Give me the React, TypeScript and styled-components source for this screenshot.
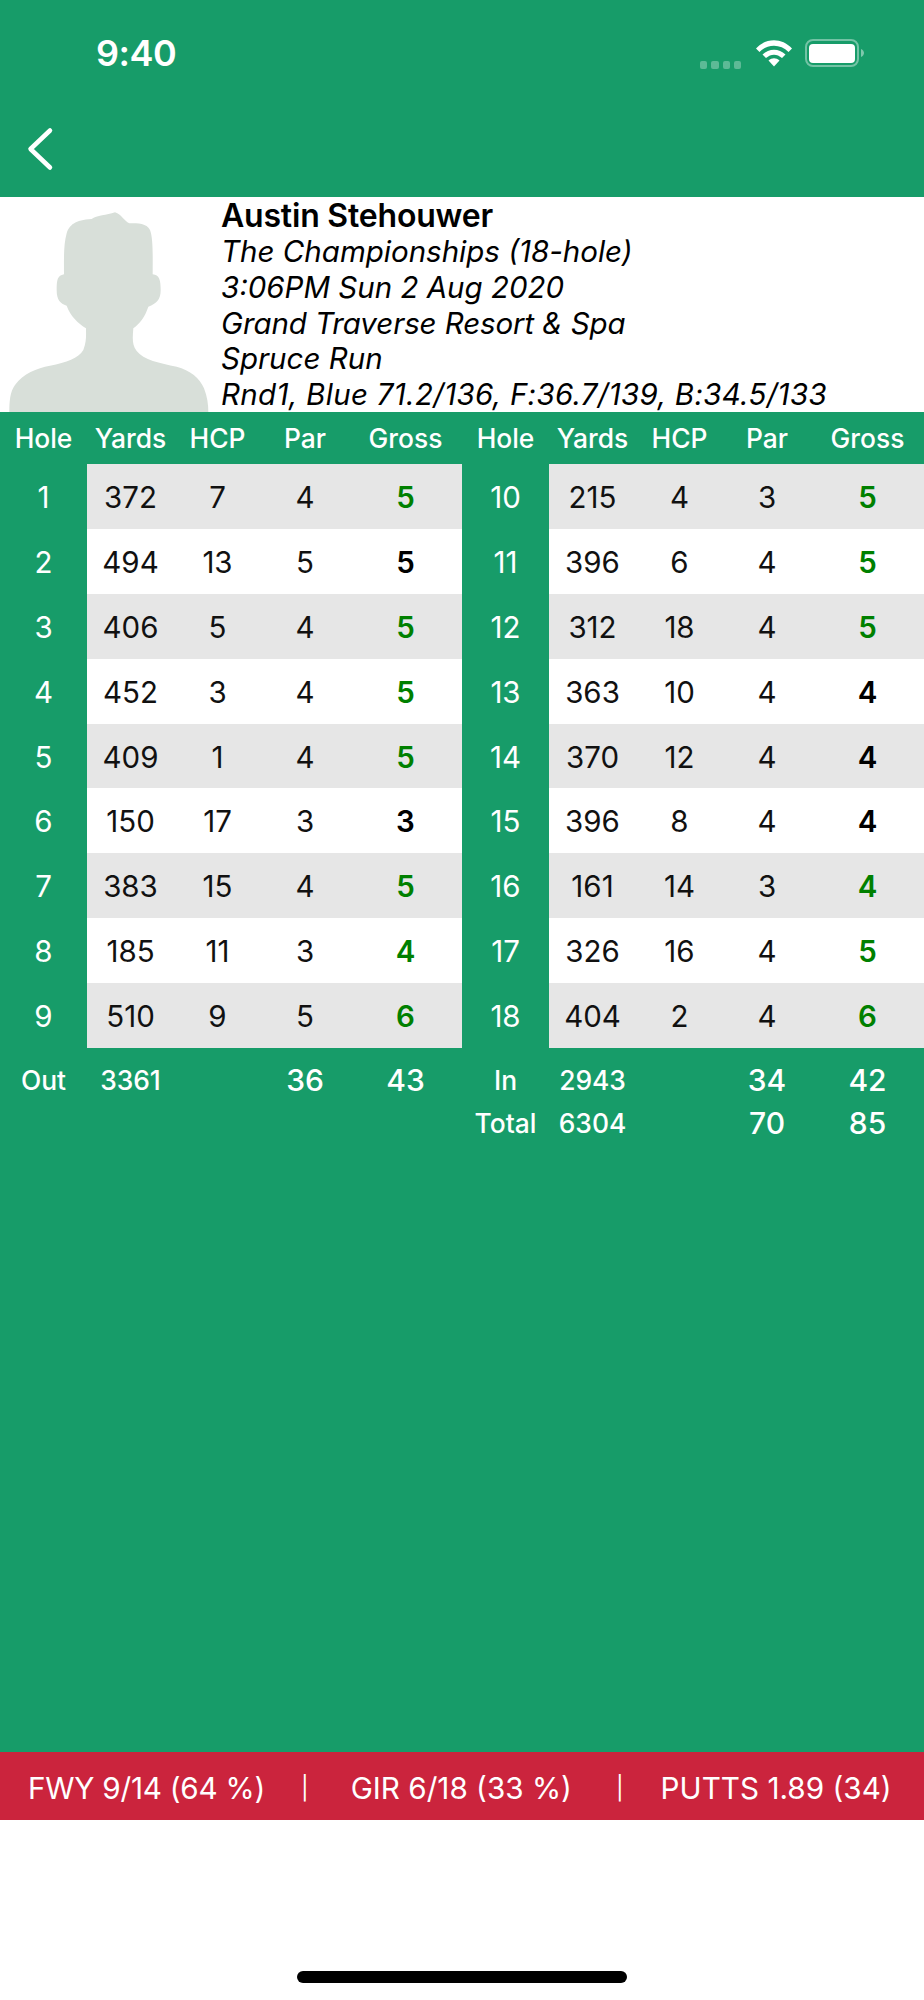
import React from "react";
import styled, { createGlobalStyle } from "styled-components";

const Global = createGlobalStyle`
  html, body { margin: 0; padding: 0; background: #fff; }
  body { font-family: Inter, "Liberation Sans", sans-serif; }
`;
const GREEN = "#179c69";

const Page = styled.div`
  width: 924px; height: 2000px; display: flex; flex-direction: column; background: ${GREEN};
`;
const Header = styled.header`
  height: 197px; flex: none; display: flex; flex-direction: column;
`;
const StatusBar = styled.div`
  height: 106px; display: flex; align-items: center; justify-content: space-between; padding: 0 59px 0 96px; box-sizing: border-box;
`;
const Time = styled.span`
  color: #fff; font-size: 36px; font-weight: 600; letter-spacing: -0.5px;
`;
const StatusIcons = styled.div`
  display: flex; align-items: center;
`;
const Dots = styled.div`
  display: flex; gap: 4px; margin-right: 14px; margin-top: 24px;
`;
const Dot = styled.i`
  width: 7.25px; height: 8px; border-radius: 2px; background: rgba(255,255,255,.3); display: block;
`;
const Nav = styled.div`
  padding: 21px 0 0 26px; display: flex;
`;
const Profile = styled.section`
  height: 215px; flex: none; background: #fff; display: flex; overflow: hidden;
`;
const Avatar = styled.svg`
  width: 221px; height: 215px; flex: none; display: block;
`;
const Info = styled.div`
  display: flex; flex-direction: column; color: #000;
`;
const Name = styled.div`
  font-size: 32px; font-weight: 600; line-height: 37px; height: 37px; letter-spacing: -0.2px;
`;
const InfoLine = styled.div<{ $spread?: number }>`
  font-size: 29.5px; font-style: italic; line-height: 35.8px; white-space: nowrap;
  letter-spacing: ${p => p.$spread ?? 0}px;
`;
const Tables = styled.div`
  display: flex; flex: 1;
`;
const Half = styled.div`
  width: 462px; display: flex; flex-direction: column;
`;
const Grid = styled.div`
  display: grid; grid-template-columns: 87px 87px 87px 88px 113px; align-items: center; justify-items: center;
`;
const HeadRow = styled(Grid)`
  height: 52px; color: #fff; font-size: 26.4px; font-weight: 500;
`;
const Row = styled(Grid)<{ $odd: boolean }>`
  height: 64.9px; padding-top: 1px; box-sizing: border-box;
  background: linear-gradient(to right, ${GREEN} 87px, ${p => (p.$odd ? "#e6e6e6" : "#fff")} 87px);
  font-size: 29.5px; color: #111;
`;
const HoleNo = styled.span`
  color: #fff;
`;
const Gross = styled.span<{ $par: boolean }>`
  font-weight: 600; color: ${p => (p.$par ? "#000" : "#008000")};
`;
const Summary = styled(Grid)<{ $first?: boolean }>`
  height: 43.5px; margin-top: ${p => (p.$first ? "10px" : "0")}; color: #fff; font-size: 26.4px; font-weight: 500;
`;
const BigNum = styled.span`
  font-size: 30px; font-weight: 500;
`;
const Footer = styled.footer`
  height: 68px; flex: none; background: #cb243d; color: #fff; display: flex; align-items: center; padding: 3px 0 0 28px; font-size: 29.7px; box-sizing: border-box;
`;
const Stat = styled.span<{ $spread?: number }>`
  letter-spacing: ${p => p.$spread ?? 0}px; white-space: nowrap;
`;
const Sep = styled.span<{ $before: number; $after: number }>`
  font-size: 23px; font-weight: 400; margin: 0 ${p => p.$after}px 0 ${p => p.$before}px;
`;
const Bottom = styled.div`
  height: 180px; flex: none; background: #fff; display: flex; justify-content: center; align-items: flex-end; padding-bottom: 17px; box-sizing: border-box;
`;
const HomeBar = styled.div`
  width: 330px; height: 12px; background: #000; border-radius: 6px;
`;

const front: number[][] = [
  [1,372,7,4,5],[2,494,13,5,5],[3,406,5,4,5],[4,452,3,4,5],[5,409,1,4,5],[6,150,17,3,3],[7,383,15,4,5],[8,185,11,3,4],[9,510,9,5,6],
];
const back: number[][] = [
  [10,215,4,3,5],[11,396,6,4,5],[12,312,18,4,5],[13,363,10,4,4],[14,370,12,4,4],[15,396,8,4,4],[16,161,14,3,4],[17,326,16,4,5],[18,404,2,4,6],
];

const Head = () => (
  <HeadRow>
    <span>Hole</span><span>Yards</span><span>HCP</span><span>Par</span><span>Gross</span>
  </HeadRow>
);
const Rows = ({ data }: { data: number[][] }) => (
  <>
    {data.map((r, i) => (
      <Row key={r[0]} $odd={i % 2 === 0}>
        <HoleNo>{r[0]}</HoleNo><span>{r[1]}</span><span>{r[2]}</span><span>{r[3]}</span>
        <Gross $par={r[3] === r[4]}>{r[4]}</Gross>
      </Row>
    ))}
  </>
);

export default function App() {
  return (
    <Page>
      <Global />
      <Header>
        <StatusBar>
          <Time>9:40</Time>
          <StatusIcons>
            <Dots><Dot /><Dot /><Dot /><Dot /></Dots>
            <svg width="38" height="28" viewBox="0 0 38 28" style={{ marginRight: 12 }}>
              <path d="M1 9.5C11 -1.5 27 -1.5 37 9.5L33.5 13C25.5 4.5 12.5 4.5 4.5 13Z" fill="#fff" />
              <path d="M7.5 15.5C14 9 24 9 30.5 15.5L27 19C22 14.5 16 14.5 11 19Z" fill="#fff" />
              <path d="M13.5 21.5C17 18.5 21 18.5 24.5 21.5L19 27.5Z" fill="#fff" />
            </svg>
            <svg width="60" height="28" viewBox="0 0 60 28">
              <rect x="1" y="1" width="52" height="26" rx="7" fill="none" stroke="#fff" strokeOpacity=".4" strokeWidth="2" />
              <rect x="4" y="5" width="46" height="19" rx="4" fill="#fff" />
              <path d="M56 10C58 11 59 12.5 59 14C59 15.5 58 17 56 18Z" fill="#fff" fillOpacity=".45" />
            </svg>
          </StatusIcons>
        </StatusBar>
        <Nav>
          <svg width="30" height="44" viewBox="0 0 30 44">
            <path d="M24 3.5L4.5 22L24 40.5" fill="none" stroke="#fff" strokeWidth="4.5" strokeLinecap="round" strokeLinejoin="round" />
          </svg>
        </Nav>
      </Header>
      <Profile>
        <Avatar viewBox="0 6 663 645">
          <path
            fill="#d8dfd9"
            d="M28 651C28 620 30 590 45 570C70 535 110 520 150 512C200 503 235 490 250 465C260 440 258 420 258 400C235 385 212 365 200 332C180 325 170 315 170 285C170 255 172 242 192 238C192 200 190 150 200 115C208 90 225 75 275 72C290 62 320 60 345 52C365 58 372 78 388 85C415 85 440 85 450 105C460 130 458 190 458 238C478 240 482 255 482 285C482 315 470 325 445 335C435 365 420 385 400 400C398 425 395 450 410 468C430 495 480 505 530 515C570 525 600 550 612 580C622 605 625 630 625 651Z"
          />
        </Avatar>
        <Info>
          <Name>Austin Stehouwer</Name>
          <InfoLine>The Championships (18-hole)</InfoLine>
          <InfoLine>3:06PM Sun 2 Aug 2020</InfoLine>
          <InfoLine $spread={-0.1}>Grand Traverse Resort &amp; Spa</InfoLine>
          <InfoLine>Spruce Run</InfoLine>
          <InfoLine $spread={0.3}>Rnd1, Blue 71.2/136, F:36.7/139, B:34.5/133</InfoLine>
        </Info>
      </Profile>
      <Tables>
        <Half>
          <Head />
          <Rows data={front} />
          <Summary $first>
            <span>Out</span><span>3361</span><span /><BigNum>36</BigNum><BigNum>43</BigNum>
          </Summary>
        </Half>
        <Half>
          <Head />
          <Rows data={back} />
          <Summary $first>
            <span>In</span><span>2943</span><span /><BigNum>34</BigNum><BigNum>42</BigNum>
          </Summary>
          <Summary>
            <span>Total</span><span>6304</span><span /><BigNum>70</BigNum><BigNum>85</BigNum>
          </Summary>
        </Half>
      </Tables>
      <Footer>
        <Stat $spread={-0.25}>FWY 9/14 (64 %)</Stat>
        <Sep $before={36} $after={42}>|</Sep>
        <Stat>GIR 6/18 (33 %)</Stat>
        <Sep $before={44} $after={37}>|</Sep>
        <Stat>PUTTS 1.89 (34)</Stat>
      </Footer>
      <Bottom><HomeBar /></Bottom>
    </Page>
  );
}
